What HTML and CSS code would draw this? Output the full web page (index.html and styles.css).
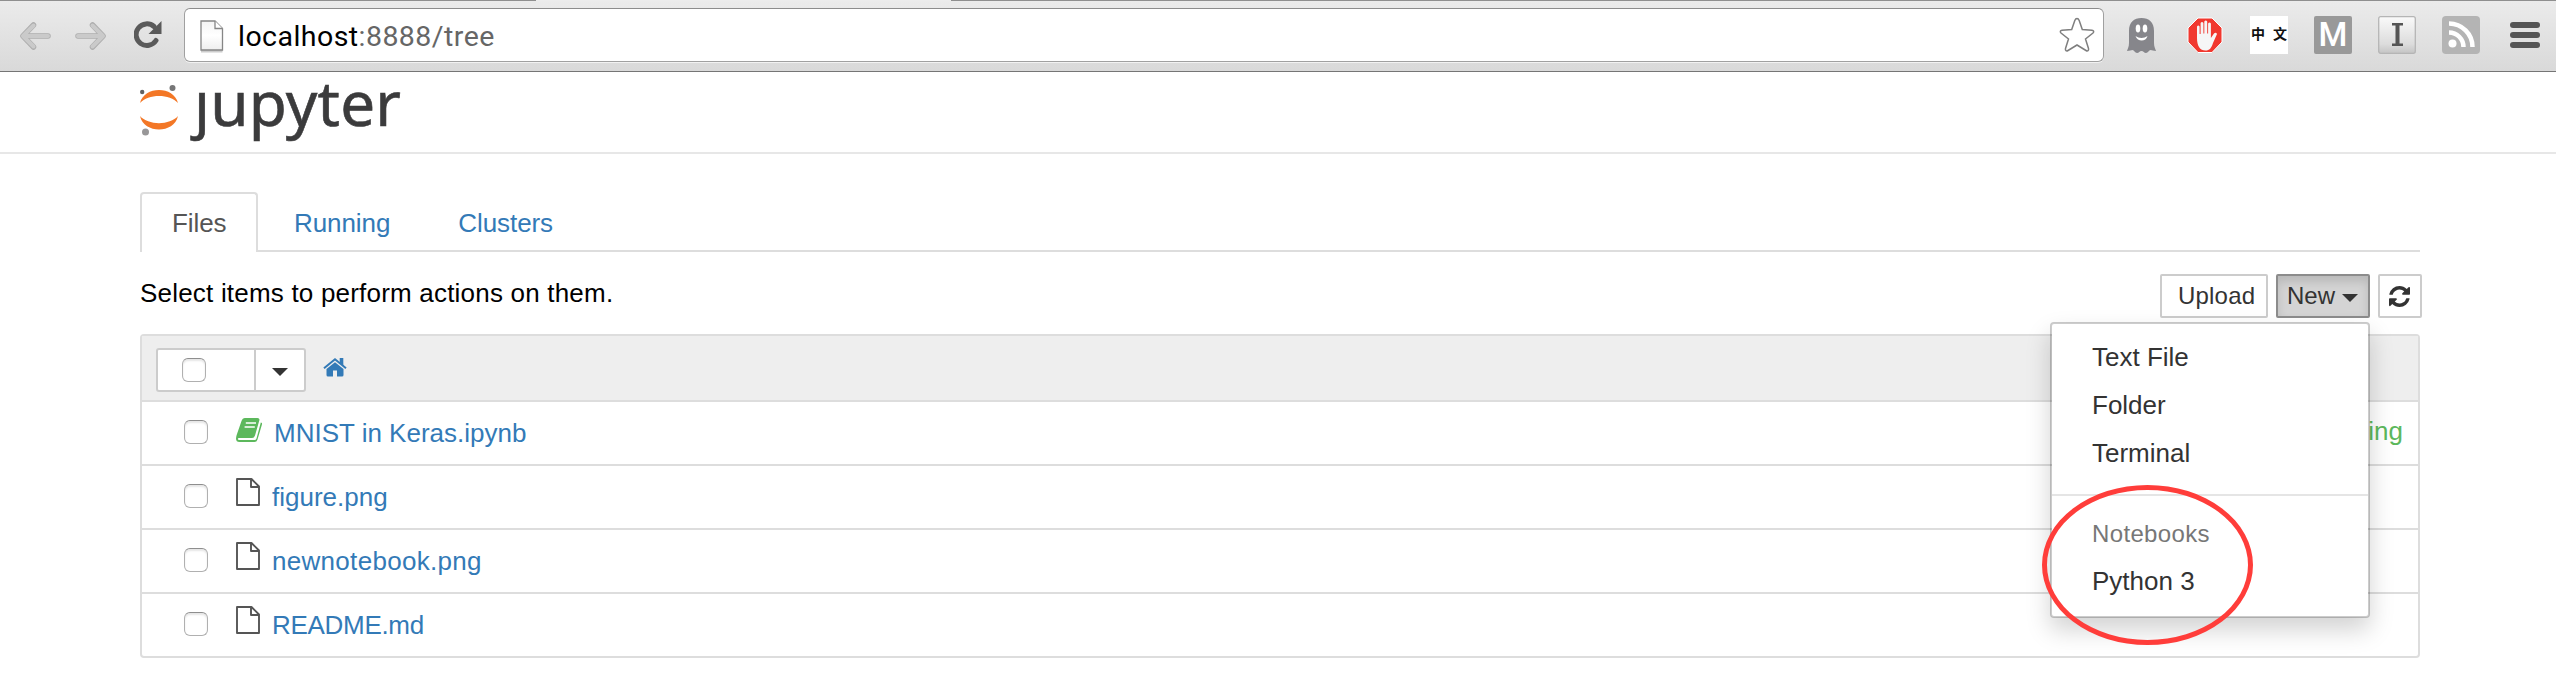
FILE: index.html
```html
<!DOCTYPE html>
<html lang="en">
<head>
<meta charset="utf-8">
<title>Home</title>
<link rel="stylesheet" href="styles.css">
</head>
<body>
<svg class="defs" width="0" height="0">
  <defs>
    <linearGradient id="paper" x1="0" y1="0" x2="0" y2="1"><stop offset="0" stop-color="#f4f4f4"/><stop offset=".5" stop-color="#fff"/><stop offset="1" stop-color="#eee"/></linearGradient>
    <linearGradient id="tile" x1="0" y1="0" x2="0" y2="1"><stop offset="0" stop-color="#fafafa"/><stop offset=".75" stop-color="#dcdcdc"/><stop offset="1" stop-color="#c4c4c4"/></linearGradient>
    <symbol id="file" viewBox="0 0 24 28"><path d="M1 1H15.5L23 8.5V27H1ZM15 1V9H23" fill="none" stroke="#555" stroke-width="1.9" stroke-linejoin="round"/></symbol>
  </defs>
</svg>

<div class="browser">
  <div class="tab-gap"></div>
  <svg class="nav-icon back" viewBox="0 0 32 28"><path d="M14 3 3.5 14 14 25M4 14H28.500" fill="none" stroke="#adadad" stroke-width="5.500" stroke-linecap="round" stroke-linejoin="round"/><path d="M14 3.500 3.500 14 14 24.500M4 14H28.500" fill="none" stroke="#cacaca" stroke-width="4" stroke-linecap="round" stroke-linejoin="round"/></svg>
  <svg class="nav-icon forward" viewBox="0 0 32 28"><path d="M18 3 28.500 14 18 25M28 14H3.500" fill="none" stroke="#adadad" stroke-width="5.500" stroke-linecap="round" stroke-linejoin="round"/><path d="M18 3.500 28.500 14 18 24.500M28 14H3.500" fill="none" stroke="#cacaca" stroke-width="4" stroke-linecap="round" stroke-linejoin="round"/></svg>
  <svg class="reload" viewBox="0 0 28 28"><path d="M22 19.500A10.800 10.800 0 1 1 20 5.500" fill="none" stroke="#5a5a5a" stroke-width="5" stroke-linecap="round"/><path d="M27.500 0V13H14.500Z" fill="#5a5a5a"/></svg>
  <div class="address">
    <svg class="page-icon" viewBox="0 0 24 34"><path d="M1 1.500H15L22.500 9V31.500H1Z" fill="#ccc" transform="translate(0 1)"/><path d="M1 1H15L22.500 8.500V30H1Z" fill="url(#paper)" stroke="#868686" stroke-width="1.300"/><path d="M15 1V8.500H22.500" fill="#fff" stroke="#868686" stroke-width="1.300"/></svg>
    <span class="url"><span class="host">localhost</span>:8888/tree</span>
    <svg class="star" viewBox="0 0 36 36"><path d="M18 1.500C19.200 1.500 19.800 2.500 20.200 3.500L23.300 12.500 33 13.200C34.800 13.400 35.200 14.800 34 16L26.500 22 29.500 31.500C30 33.500 28.600 34.500 27 33.500L18 28 9 33.500C7.400 34.500 6 33.500 6.500 31.500L9.500 22 2 16C.8 14.800 1.200 13.400 3 13.200L12.700 12.500 15.800 3.500C16.200 2.500 16.800 1.500 18 1.500Z" fill="#fff" stroke="#7f7f7f" stroke-width="1.500"/></svg>
  </div>
  <div class="extensions">
    <svg class="ext" viewBox="0 0 38 38"><path d="M7 15C7 6 12 2 19.500 2S32 6 32 15V27C32 31 33.500 33 34 35 31.500 35 30 34 28.500 34 27 34 26 37 24 37 22 37 21.500 35 19.500 35S17 37 15 37 12 34 10.500 34 8 35 5 35C5.500 33 7 31 7 27Z" fill="#86868b"/><ellipse cx="16" cy="12.500" rx="2.300" ry="4" fill="#fff"/><ellipse cx="23" cy="12.500" rx="2.300" ry="4" fill="#fff"/><path d="M13.500 20C17 22.500 22 22.500 25.500 20 24 26 15.500 26 13.500 20Z" fill="#fff"/></svg>
    <svg class="ext" viewBox="0 0 38 38"><path d="M12 2H26L36 12V26L26 36.500H12L2 26V12Z" fill="#f1382f" stroke="#fff" stroke-width="1"/><path d="M11 22V10.500Q12.300 8.500 13.600 10.500V18H14.600V7Q16 5 17.400 7V17.500H18.300V5.500Q19.800 3.500 21.200 5.500V17.500H22.100V7.500Q23.500 5.500 24.900 7.500V22L28 17.500Q30 16 31 18L27 27C25.500 32 23.500 34.500 19.500 34.500 14 34.500 11 30 11 22Z" fill="#f6f6f6"/></svg>
    <span class="ext chinese"><span>中</span><span>文</span></span>
    <span class="ext letter-m">M</span>
    <svg class="ext" viewBox="0 0 38 38"><rect x=".7" y=".7" width="36.600" height="36.600" rx="2" fill="url(#tile)" stroke="#b5b5b5" stroke-width="1.300"/><path d="M14 7H25V9.500H21.500V27.500H25V30H14V27.500H17.500V9.500H14Z" fill="#555"/></svg>
    <svg class="ext" viewBox="0 0 38 38"><rect width="38" height="38" rx="4" fill="#b4b4b4"/><circle cx="10.500" cy="27.500" r="4" fill="#fff"/><path d="M7 16.500A14.500 14.500 0 0 1 21.500 31M7 7.500A23.500 23.500 0 0 1 30.500 31" fill="none" stroke="#fff" stroke-width="4.500"/></svg>
  </div>
  <div class="menu-icon"><i></i><i></i><i></i></div>
</div>

<header class="header">
  <svg class="planet" viewBox="0 0 40 52"><path d="M1 19C5 1.500 35 1.500 39 19 31 9.500 9 9.500 1 19Z" fill="#f37726"/><path d="M1 32C5 50 35 50 39 32 31 41.500 9 41.500 1 32Z" fill="#f37726"/><circle cx="3.200" cy="8" r="2.200" fill="#616262"/><circle cx="33.500" cy="4" r="3" fill="#767677"/><circle cx="6.500" cy="48" r="3.500" fill="#989798"/></svg>
  <span class="wordmark">jupyter</span>
</header>

<main class="container">
  <nav class="tabs"><a class="tab active">Files</a><a class="tab">Running</a><a class="tab">Clusters</a></nav>
  <div class="toolbar">
    <span class="hint">Select items to perform actions on them.</span>
    <div class="buttons">
      <span class="btn upload">Upload</span>
      <span class="btn new">New<i class="caret"></i></span>
      <span class="btn refresh"><svg viewBox="0 0 1536 1536"><path fill="#333" d="M1511 928q0 5-1 7-64 268-268 434.500T764 1536q-146 0-282.500-55T238 1324l-129 129q-19 19-45 19t-45-19-19-45V960q0-26 19-45t45-19h448q26 0 45 19t19 45-19 45l-137 137q71 66 161 102t187 36q134 0 250-65t186-179q11-17 53-117 8-23 30-23h192q13 0 22.500 9.500t9.500 22.500zm25-800v448q0 26-19 45t-45 19h-448q-26 0-45-19t-19-45 19-45l138-138Q969 256 768 256q-134 0-250 65T332 500q-11 17-53 117-8 23-30 23H50q-13 0-22.500-9.500T18 608v-7q65-268 270-434.500T768 0q146 0 284 55.500T1297 212l130-129q19-19 45-19t45 19 19 45z"/></svg></span>
      <div class="dropdown">
        <a>Text File</a><a>Folder</a><a>Terminal</a>
        <div class="divider"></div>
        <span class="group">Notebooks</span><a>Python 3</a>
        <div class="highlight"></div>
      </div>
    </div>
  </div>
  <section class="list">
    <div class="list-head">
      <div class="select"><span class="all"><i class="check"></i></span><span class="pick"><i class="caret"></i></span></div>
      <svg class="home" viewBox="0 0 24 20"><path d="M12 5.300 20.500 12V18Q20.500 19.500 19 19.500H14V13.500H10V19.500H5Q3.500 19.500 3.500 18V12Z" fill="#337ab7"/><path d="M1 11.300 12 2.300 23 11.300" fill="none" stroke="#337ab7" stroke-width="2"/><path d="M16.700 1H20.300V9L16.700 6Z" fill="#337ab7"/></svg>
    </div>
    <div class="row"><i class="check"></i><svg class="book" viewBox="0 0 26 24"><path d="M9 0H21.500Q24 0 23.300 2.500L19 17.500Q18.200 20 16 20H3Q1.800 20 1.800 21T3.500 22H18.500Q20 22 20.500 20.500L24.800 4.500 26 5Q26.200 6 25.800 7L21.500 21.500Q20.700 24 18.500 24H3.500Q0 24 0 20.500 0 18.500 1 16L5.500 3Q6.500 0 9 0Z" fill="#5cb85c"/><path d="M9.800 4.900H20M8.600 8.900H18.800" stroke="#fff" stroke-width="1.500"/></svg><a class="name">MNIST in Keras.ipynb</a><span class="running">Running</span></div>
    <div class="row"><i class="check"></i><svg class="file"><use href="#file"/></svg><a class="name">figure.png</a></div>
    <div class="row"><i class="check"></i><svg class="file"><use href="#file"/></svg><a class="name wide">newnotebook.png</a></div>
    <div class="row"><i class="check"></i><svg class="file"><use href="#file"/></svg><a class="name tight">README.md</a></div>
  </section>
</main>
</body>
</html>
```
FILE: styles.css
```css
* { box-sizing: border-box; }
html, body { margin: 0; background: #fff; }
body { height: 696px; overflow: hidden; font: 26px/36px "Liberation Sans", Arial, sans-serif; color: #000; }
svg { display: block; flex: none; }
.defs { position: absolute; }

.browser { position: relative; z-index: 1; display: flex; align-items: flex-start; height: 72px; padding-left: 19px; border-top: 1px solid #8f8f8f; border-bottom: 1px solid #757575; background: linear-gradient(#ebebeb, #d9d9d9); }
.tab-gap { position: absolute; left: 536px; top: -1px; width: 415px; height: 1px; background: #ececec; }
.nav-icon { width: 33px; height: 28px; margin-top: 21px; }
.forward { margin-left: 22px; }
.reload { width: 28px; height: 28px; margin: 20px 0 0 27px; }
.address { display: flex; width: 1920px; height: 54px; margin: 7px 0 0 22px; padding: 0 8px 0 15px; border: 1px solid #a0a0a0; border-top-color: #8c8c8c; border-radius: 6px; background: #fff; box-shadow: 0 1px 0 #f2f2f2; }
.page-icon { width: 24px; height: 34px; margin-top: 11px; }
.url { flex: 1; margin: 10px 0 0 14px; font: 28.5px/36px Roboto, sans-serif; letter-spacing: .45px; color: #666; }
.host { color: #000; }
.star { width: 36px; height: 36px; margin-top: 8px; }
.extensions { display: flex; gap: 26px; margin: 15px 0 0 18px; }
.ext { width: 38px; height: 38px; }
.chinese { display: flex; justify-content: space-between; padding: 0 1px; background: #fff; color: #111; font: 600 14px/35px "Noto Sans CJK SC", sans-serif; }
.letter-m { border-radius: 2px; background: #999; color: #fff; font: 500 33px/38px Roboto, sans-serif; text-align: center; }
.menu-icon { display: flex; flex-direction: column; gap: 4px; margin: 21px 0 0 30px; }
.menu-icon i { width: 30px; height: 6px; border-radius: 3px; background: #555; }

.header { display: flex; height: 82px; padding-left: 139px; border-bottom: 2px solid #e7e7e7; }
.planet { width: 40px; height: 52px; margin-top: 12px; }
.wordmark { position: relative; margin: -12px 0 0 15px; font: 62px/84px "Noto Sans", sans-serif; letter-spacing: .2px; -webkit-text-stroke: .6px #3b3b3c; color: #3b3b3c; }
/* the logo's j has no dot: the planet's moons stand in for it */
.wordmark::before { content: ""; position: absolute; left: -4px; top: 12px; width: 24px; height: 19px; background: #fff; }

.container { width: 2280px; margin: 38px 0 0 140px; }
.tabs { display: flex; gap: 4px; height: 60px; border-bottom: 2px solid #ddd; }
.tab { height: 60px; padding: 11px 30px 0; border: 2px solid transparent; letter-spacing: -.08px; color: #337ab7; }
.tab.active { width: 118px; padding-right: 0; border-color: #ddd; border-bottom: 0; border-radius: 4px 4px 0 0; background: #fff; color: #555; }
.toolbar { display: flex; justify-content: space-between; height: 82px; padding-top: 22px; margin-right: -2px; }
.hint { margin-top: 1px; letter-spacing: .2px; }
.buttons { position: relative; display: flex; gap: 8px; height: 44px; }
.btn { display: flex; align-items: center; height: 44px; border: 2px solid #ccc; border-radius: 2px; background: #fff; color: #333; font-size: 24px; }
.upload { width: 108px; padding-left: 16px; letter-spacing: .2px; }
.new { width: 94px; padding-left: 9px; border-color: #8c8c8c; background: #d4d4d4; box-shadow: inset 0 6px 10px rgba(0, 0, 0, .125); }
.new .caret { margin: 4px 0 0 7px; }
.refresh { width: 44px; padding-left: 9px; }
.refresh svg { width: 21px; height: 21px; }
.caret { width: 0; height: 0; border: 8px solid transparent; border-top-color: #333; border-bottom: 0; }
.dropdown { position: absolute; z-index: 2; right: 52px; top: 48px; width: 320px; height: 296px; padding: 10px 0; border: 2px solid #ccc; border-color: rgba(0, 0, 0, .2); border-radius: 4px; background: #fff; background-clip: padding-box; box-shadow: 0 12px 24px rgba(0, 0, 0, .175); }
.dropdown a, .dropdown .group { display: block; height: 48px; padding: 5px 40px 0; color: #333; }
.dropdown .divider { height: 2px; margin: 16px 0 16px; background: #e5e5e5; }
.dropdown .group { height: 46px; padding-top: 4px; font-size: 24px; letter-spacing: .35px; color: #777; }
.highlight { position: absolute; left: -10px; top: 161px; width: 211px; height: 160px; border: 5px solid #ff3d3a; border-radius: 50%; }

.list { border: 2px solid #ddd; border-radius: 4px; }
.list-head { display: flex; height: 64px; padding: 12px 0 0 14px; background: #eee; }
.select { display: flex; width: 150px; height: 44px; border: 2px solid #ccc; border-radius: 3px; background: #fff; }
.all { width: 98px; padding: 8px 0 0 24px; border-right: 2px solid #ccc; }
.pick { flex: 1; padding: 18px 0 0 16px; }
.pick .caret { display: block; }
.check { display: block; flex: none; width: 24px; height: 24px; border: 1px solid #b0b0b0; border-top-color: #8e8e8e; border-radius: 6px; background: #fff; box-shadow: inset 0 2px 2px #e6e6e6; }
.home { width: 24px; height: 20px; margin: 9px 0 0 17px; }
.row { display: flex; height: 64px; padding: 0 15px 0 42px; border-top: 2px solid #ddd; }
.row .check { margin-top: 18px; }
.book { width: 26px; height: 24px; margin: 16px 0 0 28px; }
.file { width: 24px; height: 28px; margin: 12px 0 0 28px; }
.name { flex: 1; margin: 13px 0 0 12px; color: #337ab7; }
.name.wide { letter-spacing: .3px; }
.name.tight { letter-spacing: -.3px; }
.running { margin-top: 11px; color: #5cb85c; }
```
